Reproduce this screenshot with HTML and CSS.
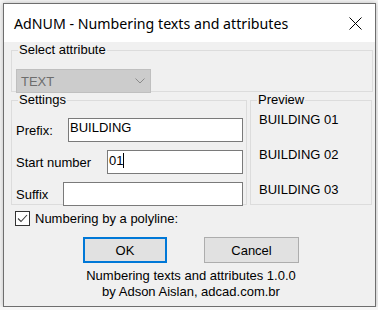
FILE: index.html
```html
<!DOCTYPE html>
<html lang="en">
<head>
    <meta charset="UTF-8">
    <title>AdNUM - Numbering texts and attributes</title>
    <link rel="stylesheet" href="styles.css">
</head>
<body>
    <div class="window">
        <div class="titlebar">
            <span class="title">AdNUM - Numbering texts and attributes</span>
            <svg class="close" width="13" height="13" viewBox="0 0 13 13">
                <path d="M0.5 0.5 L12.5 12.5 M12.5 0.5 L0.5 12.5" stroke="#000" stroke-width="1" fill="none"/>
            </svg>
        </div>
        <div class="content">
            <fieldset class="group group-select">
                <legend>Select attribute</legend>
                <div class="combo">
                    <span>TEXT</span>
                    <svg width="10" height="6" viewBox="0 0 10 6">
                        <path d="M0.5 0.5 L5 5 L9.5 0.5" stroke="#8a8a8a" stroke-width="1" fill="none"/>
                    </svg>
                </div>
            </fieldset>
            <div class="panels">
                <fieldset class="group group-settings">
                    <legend>Settings</legend>
                    <div class="field">
                        <label>Prefix:</label>
                        <div class="textbox textbox-prefix">BUILDING</div>
                    </div>
                    <div class="field">
                        <label>Start number</label>
                        <div class="textbox textbox-start">01<span class="caret"></span></div>
                    </div>
                    <div class="field">
                        <label>Suffix</label>
                        <div class="textbox textbox-suffix"></div>
                    </div>
                </fieldset>
                <fieldset class="group group-preview">
                    <legend>Preview</legend>
                    <div class="preview-item">BUILDING 01</div>
                    <div class="preview-item">BUILDING 02</div>
                    <div class="preview-item">BUILDING 03</div>
                </fieldset>
            </div>
            <label class="check">
                <span class="checkbox">
                    <svg width="13" height="13" viewBox="0 0 13 13">
                        <path d="M2 6.5 L5 9.5 L11 3" stroke="#3c3c3c" stroke-width="1.1" fill="none"/>
                    </svg>
                </span>
                Numbering by a polyline:
            </label>
            <div class="buttons">
                <button class="btn btn-default">OK</button>
                <button class="btn">Cancel</button>
            </div>
            <div class="about">
                Numbering texts and attributes 1.0.0<br>
                by Adson Aislan, adcad.com.br
            </div>
        </div>
    </div>
</body>
</html>
```

FILE: styles.css
```css
body {
    margin: 0;
    background: #f6f6f6;
    font-family: "Liberation Sans", Arial, sans-serif;
    font-size: 13px;
    color: #000;
}
.window {
    margin: 3px 0 0 3px;
    width: 373px;
    height: 304px;
    box-sizing: border-box;
    border: 1px solid #6e6e6e;
    background: #f0f0f0;
    box-shadow: 0 0 5px rgba(0, 0, 0, 0.25);
}
.titlebar {
    height: 38px;
    background: #fff;
    display: flex;
    align-items: center;
    padding: 0 13px 0 10px;
}
.title {
    flex: 1;
    font-family: "Segoe UI", "Noto Sans", sans-serif;
    font-size: 14.2px;
}
.content {
    padding: 0 2px 0 7px;
}
.group {
    margin: 0;
    padding: 0;
    border: 1px solid #dcdcdc;
    box-sizing: border-box;
    min-width: 0;
}
.group legend {
    margin-left: 2px;
    padding: 0 1px;
    line-height: 16px;
}
.group-select {
    padding: 11px 0 0 4px;
}
.combo {
    width: 135px;
    height: 24px;
    margin-bottom: -2px;
    box-sizing: border-box;
    background: #cccccc;
    border: 1px solid #bfbfbf;
    color: #6d6d6d;
    display: flex;
    align-items: center;
    justify-content: space-between;
    padding: 0 5px 0 4px;
}
.panels {
    display: flex;
    gap: 3px;
}
.group-settings {
    width: 236px;
    height: 113px;
    padding: 10px 3px 0 4px;
}
.group-preview {
    width: 122px;
    height: 113px;
    padding: 4px 0 0 8px;
}
.group-preview legend {
    margin-left: -2px;
}
.field {
    display: flex;
    align-items: center;
    margin-bottom: 8px;
}
.textbox {
    margin-left: auto;
    height: 24px;
    box-sizing: border-box;
    background: #fff;
    border: 1px solid #7a7a7a;
    padding: 2px 1px;
    line-height: 14px;
}
.textbox-prefix { width: 175px; }
.textbox-start { width: 136px; }
.textbox-suffix { width: 180px; }
.caret {
    display: inline-block;
    width: 1px;
    height: 15px;
    background: #000;
    vertical-align: -3px;
}
.preview-item {
    line-height: 15px;
    margin-bottom: 20px;
}
.check {
    display: flex;
    align-items: center;
    gap: 5px;
    margin: 6px 0 0 4px;
    line-height: 15px;
}
.checkbox {
    width: 15px;
    height: 15px;
    box-sizing: border-box;
    border: 1px solid #333;
    background: #fff;
    display: flex;
    align-items: center;
    justify-content: center;
}
.buttons {
    display: flex;
    gap: 37px;
    margin: 11px 0 0 72px;
}
.btn {
    height: 26px;
    box-sizing: border-box;
    background: #e1e1e1;
    border: 1px solid #adadad;
    font-family: inherit;
    font-size: 13px;
    padding: 0;
    width: 95px;
}
.btn-default {
    width: 84px;
    border: 2px solid #0078d7;
}
.about {
    margin-top: 5px;
    padding-right: 2px;
    text-align: center;
    line-height: 16px;
}
```
